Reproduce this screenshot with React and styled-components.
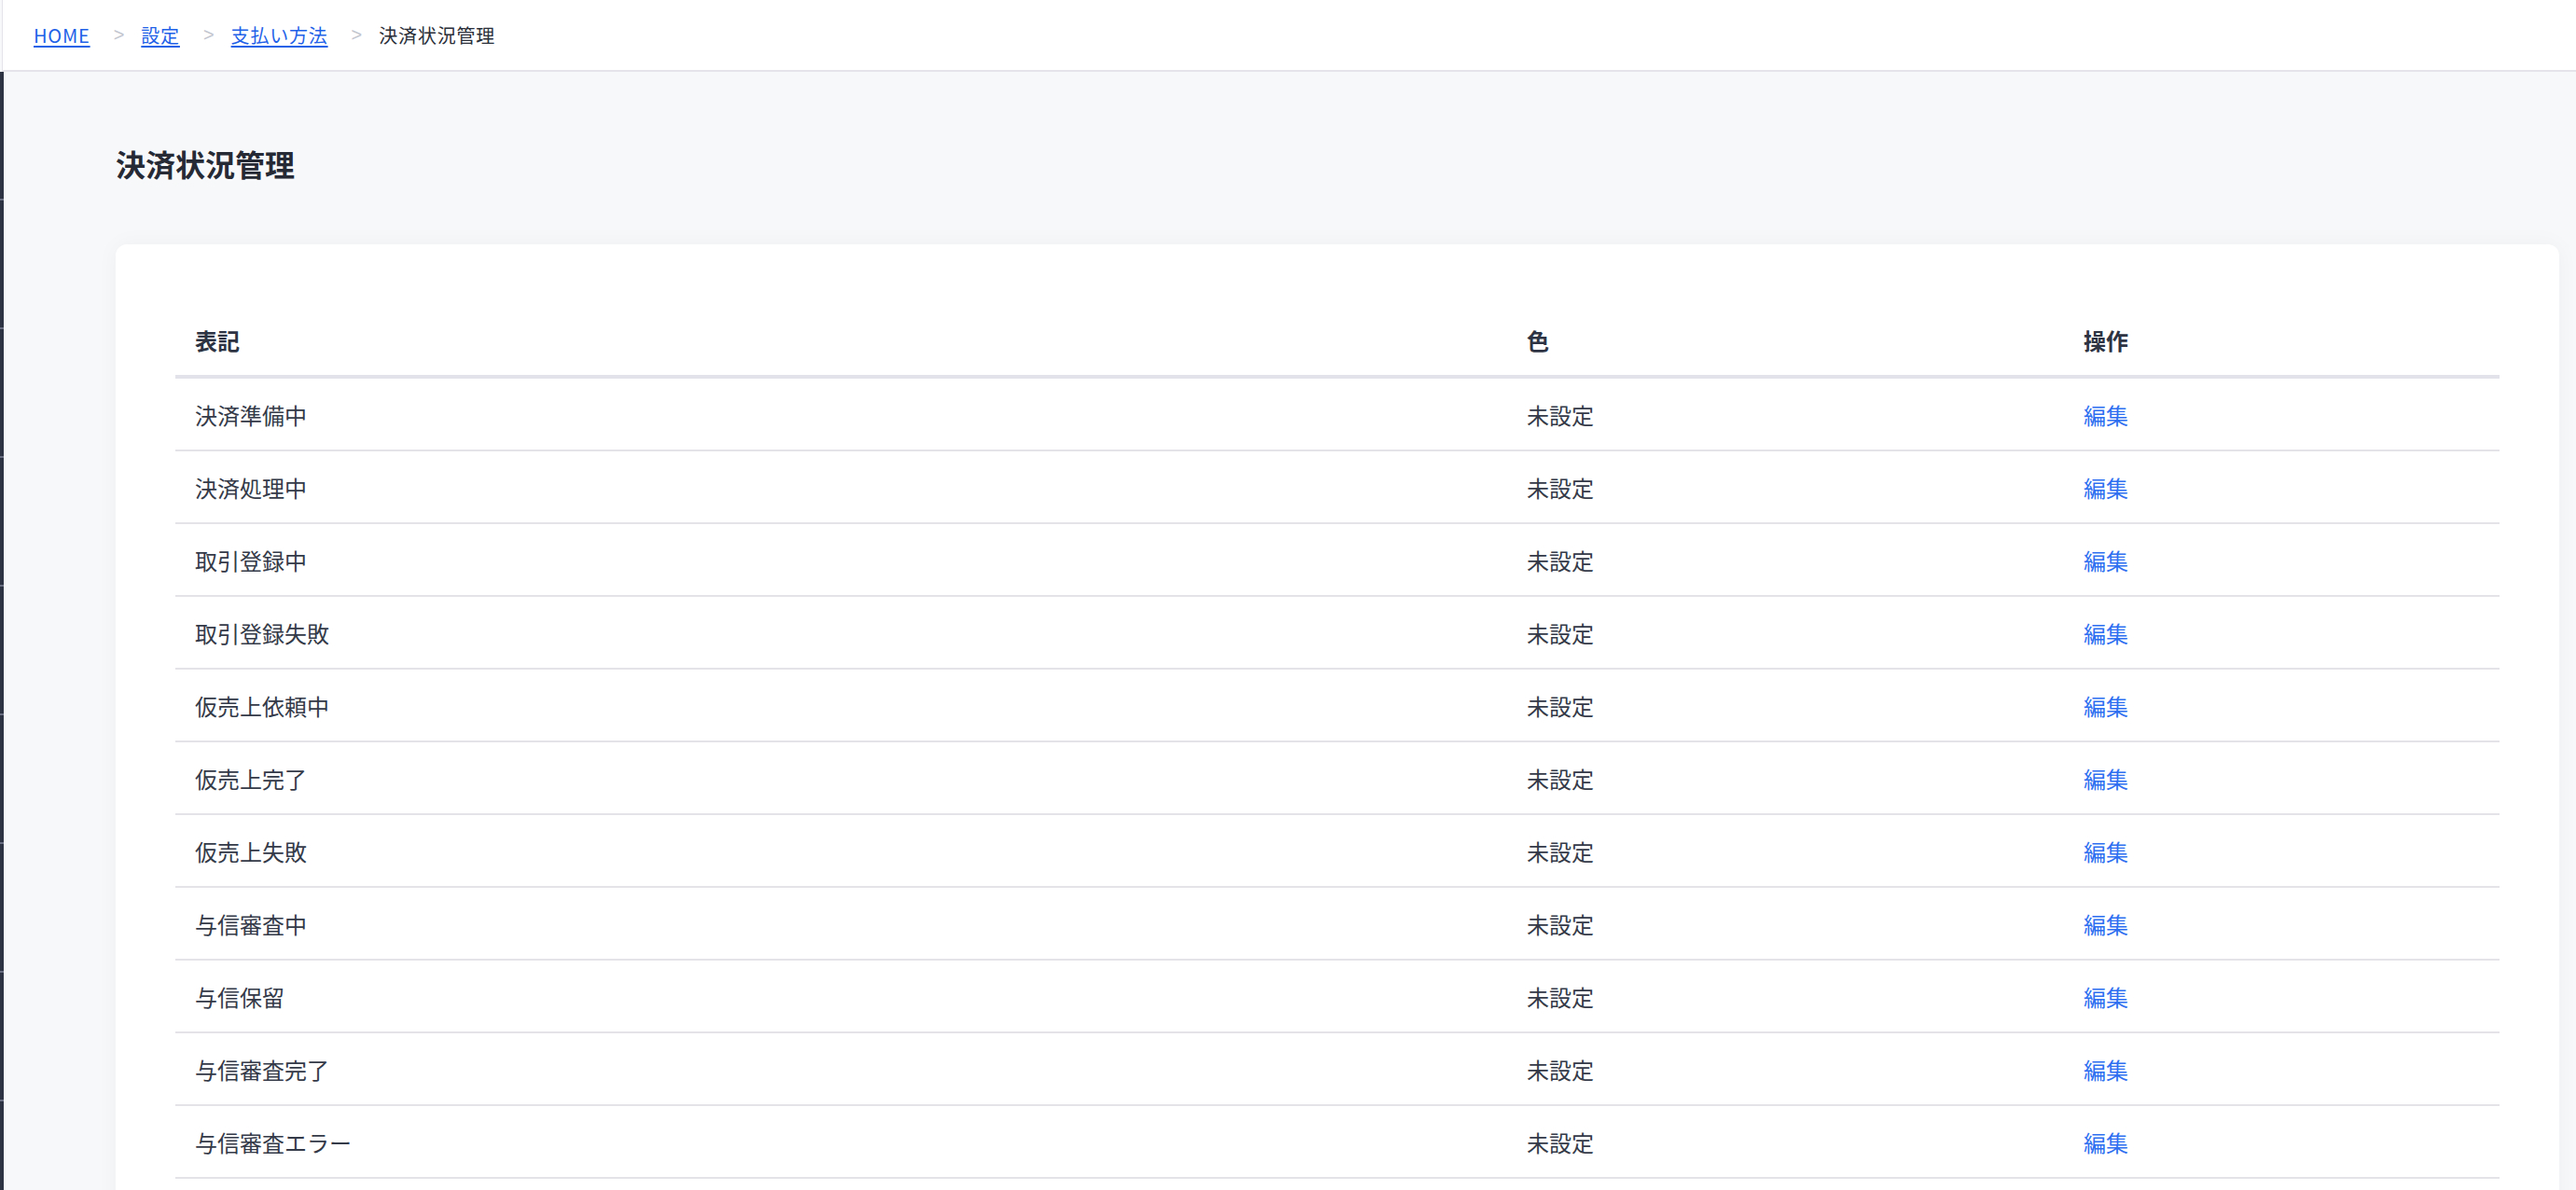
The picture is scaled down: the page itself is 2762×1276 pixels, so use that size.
import React from 'react';
import styled, { createGlobalStyle } from 'styled-components';

const GlobalStyle = createGlobalStyle`
    html, body {
        margin: 0;
        padding: 0;
        background: #f7f8fa;
        font-family: "Noto Sans CJK JP", "Noto Sans", sans-serif;
        color: #333a48;
    }
`;

const crumbs = [
    { label: 'HOME', link: true },
    { label: '設定', link: true },
    { label: '支払い方法', link: true },
    { label: '決済状況管理', link: false },
];

const statuses = [
    '決済準備中',
    '決済処理中',
    '取引登録中',
    '取引登録失敗',
    '仮売上依頼中',
    '仮売上完了',
    '仮売上失敗',
    '与信審査中',
    '与信保留',
    '与信審査完了',
    '与信審査エラー',
];

const App = () => {
    return (
        <>
            <GlobalStyle />
            <Page>
                <TopBar>
                    {crumbs.map((c, i) => (
                        <React.Fragment key={c.label}>
                            {i > 0 && <Sep>&gt;</Sep>}
                            {c.link ? <CrumbLink href="#">{c.label}</CrumbLink> : <Crumb>{c.label}</Crumb>}
                        </React.Fragment>
                    ))}
                </TopBar>
                <Body>
                    <Sidebar>
                        {Array.from({ length: 9 }).map((_, i) => (
                            <SideItem key={i} />
                        ))}
                    </Sidebar>
                    <Main>
                        <Title>決済状況管理</Title>
                        <Card>
                            <Table>
                                <colgroup>
                                    <Col $w="1428px" />
                                    <Col $w="597px" />
                                    <Col />
                                </colgroup>
                                <thead>
                                    <tr>
                                        <Th>表記</Th>
                                        <Th>色</Th>
                                        <Th>操作</Th>
                                    </tr>
                                </thead>
                                <tbody>
                                    {statuses.map((s) => (
                                        <tr key={s}>
                                            <Td>{s}</Td>
                                            <Td>未設定</Td>
                                            <Td>
                                                <EditLink href="#">編集</EditLink>
                                            </Td>
                                        </tr>
                                    ))}
                                </tbody>
                            </Table>
                        </Card>
                    </Main>
                </Body>
            </Page>
        </>
    );
};

const Page = styled.div`
    min-height: 100vh;
    display: flex;
    flex-direction: column;
`;

const TopBar = styled.header`
    height: 75px;
    display: flex;
    align-items: center;
    padding-left: 33px;
    background: #fff;
    border-left: 1px solid #e4e4ea;
    margin-left: 2px;
    border-bottom: 2px solid #e4e4ea;
    font-size: 20px;
    letter-spacing: 0.8px;
`;

const CrumbLink = styled.a`
    color: #1f62e8;
    text-decoration: underline;
    text-underline-offset: 3px;
`;

const Crumb = styled.span`
    color: #2a2e38;
`;

const Sep = styled.span`
    color: #c3c6cf;
    margin: 0 18px 0 25px;
    letter-spacing: 0;
    font-family: "Liberation Sans", sans-serif;
`;

const Body = styled.div`
    flex: 1;
    display: flex;
`;

const Sidebar = styled.nav`
    width: 4px;
    flex-shrink: 0;
    background: #2e3344;
`;

const SideItem = styled.div`
    height: 136px;
    border-bottom: 2px solid #6a7082;
`;

const Main = styled.main`
    flex: 1;
    padding: 74px 18px 0 120px;
`;

const Title = styled.h1`
    margin: 0 0 63px;
    font-size: 32px;
    line-height: 48px;
    font-weight: 700;
    color: #262a35;
`;

const Card = styled.section`
    background: #fff;
    border-radius: 12px;
    box-shadow: 0 0 24px rgba(30, 40, 60, 0.04);
    padding: 64px;
`;

const Table = styled.table`
    width: 100%;
    border-collapse: collapse;
    table-layout: fixed;
`;

const Col = styled.col`
    width: ${(p) => p.$w || 'auto'};
`;

const Th = styled.th`
    height: 76px;
    padding: 0 21px;
    text-align: left;
    font-size: 24px;
    font-weight: 700;
    color: #2d3342;
    border-bottom: 4px solid #e2e2ea;
`;

const Td = styled.td`
    height: 76px;
    padding: 0 21px;
    font-size: 24px;
    color: #343a48;
    border-bottom: 2px solid #e3e3e8;
`;

const EditLink = styled.a`
    color: #2d6ff0;
    text-decoration: none;
`;

export default App;
